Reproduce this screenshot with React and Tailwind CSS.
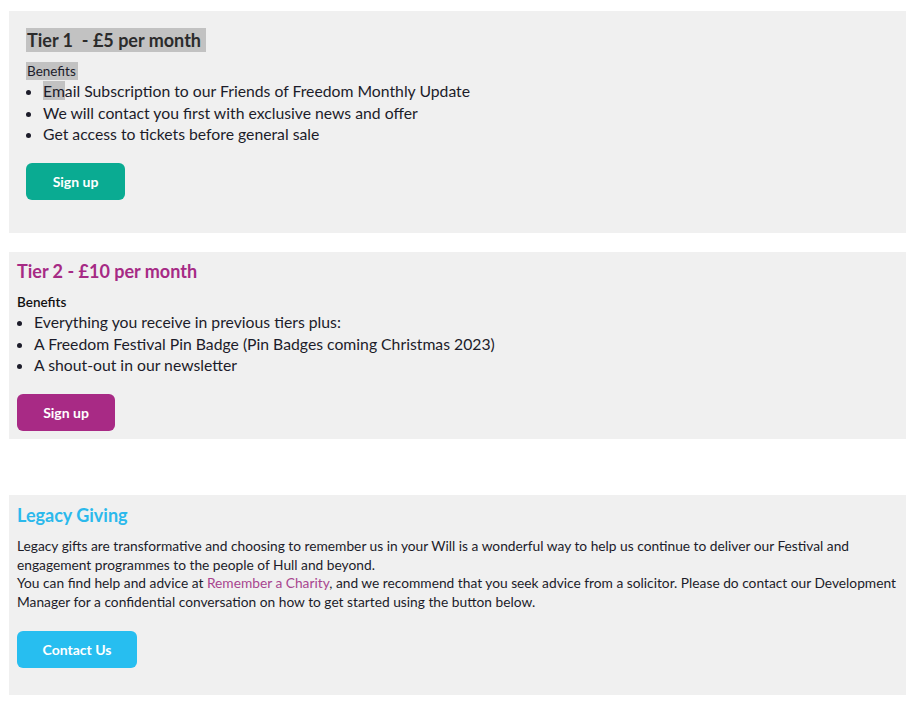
import React from "react";

const body = { fontFamily: "Lato, 'Noto Sans', sans-serif" };

export default function App() {
  return (
    <div className="bg-white w-[915px] h-[707px] px-[9px] pt-[11px] text-[#1c1c2a]" style={body}>
      <section className="bg-[#f0f0f0] h-[222px] pl-[17px] pr-[8px] pt-[17px]">
        <h2 className="text-[18px] leading-[24px] font-bold text-[#2b2b2b]">
          <span className="bg-[#c2c2c2] pr-[5px] pl-[1px] inline-block">Tier 1&nbsp; - £5 per month</span>
        </h2>
        <div className="mt-[10px] text-[13.5px] leading-[18px]">
          <span className="bg-[#c2c2c2] inline-block pl-[1px] pr-[2px]">Benefits</span>
        </div>
        <ul className="list-disc pl-[17px] text-[15.75px] leading-[21.5px]">
          <li><span className="bg-[#c2c2c2]">Em</span>ail Subscription to our Friends of Freedom Monthly Update</li>
          <li>We will contact you first with exclusive news and offer</li>
          <li>Get access to tickets before general sale</li>
        </ul>
        <button className="mt-[18px] w-[99px] h-[37px] rounded-[6px] bg-[#0aab92] text-white text-[14px] font-bold">
          Sign up
        </button>
      </section>

      <section className="mt-[19px] bg-[#f0f0f0] h-[187px] pl-[8px] pr-[8px] pt-[7px]">
        <h2 className="text-[18px] leading-[24px] font-bold text-[#a62a85]">Tier 2 - £10 per month</h2>
        <div className="mt-[10px] text-[13.5px] leading-[18px] font-semibold text-[#111]">Benefits</div>
        <ul className="list-disc pl-[17px] text-[15.75px] leading-[21.5px]">
          <li>Everything you receive in previous tiers plus:</li>
          <li>A Freedom Festival Pin Badge (Pin Badges coming Christmas 2023)</li>
          <li>A shout-out in our newsletter</li>
        </ul>
        <button className="mt-[18px] w-[98px] h-[37px] rounded-[6px] bg-[#a82a85] text-white text-[14px] font-bold">
          Sign up
        </button>
      </section>

      <section className="mt-[56px] bg-[#f0f0f0] h-[200px] pl-[8px] pr-[8px] pt-[8px]">
        <h2 className="text-[18px] leading-[24px] font-bold text-[#2bb9ec]">Legacy Giving</h2>
        <p className="mt-[10px] text-[13.75px] leading-[18.7px]">
          Legacy gifts are transformative and choosing to remember us in your Will is a wonderful way to help us continue to deliver our Festival and engagement programmes to the people of Hull and beyond.
          <br />
          You can find help and advice at <a className="text-[#a8458f]">Remember a Charity</a>, and we recommend that you seek advice from a solicitor. Please do contact our Development Manager for a confidential conversation on how to get started using the button below.
        </p>
        <button className="mt-[19px] w-[120px] h-[37px] rounded-[6px] bg-[#27bef0] text-white text-[14px] font-bold">
          Contact Us
        </button>
      </section>
    </div>
  );
}
